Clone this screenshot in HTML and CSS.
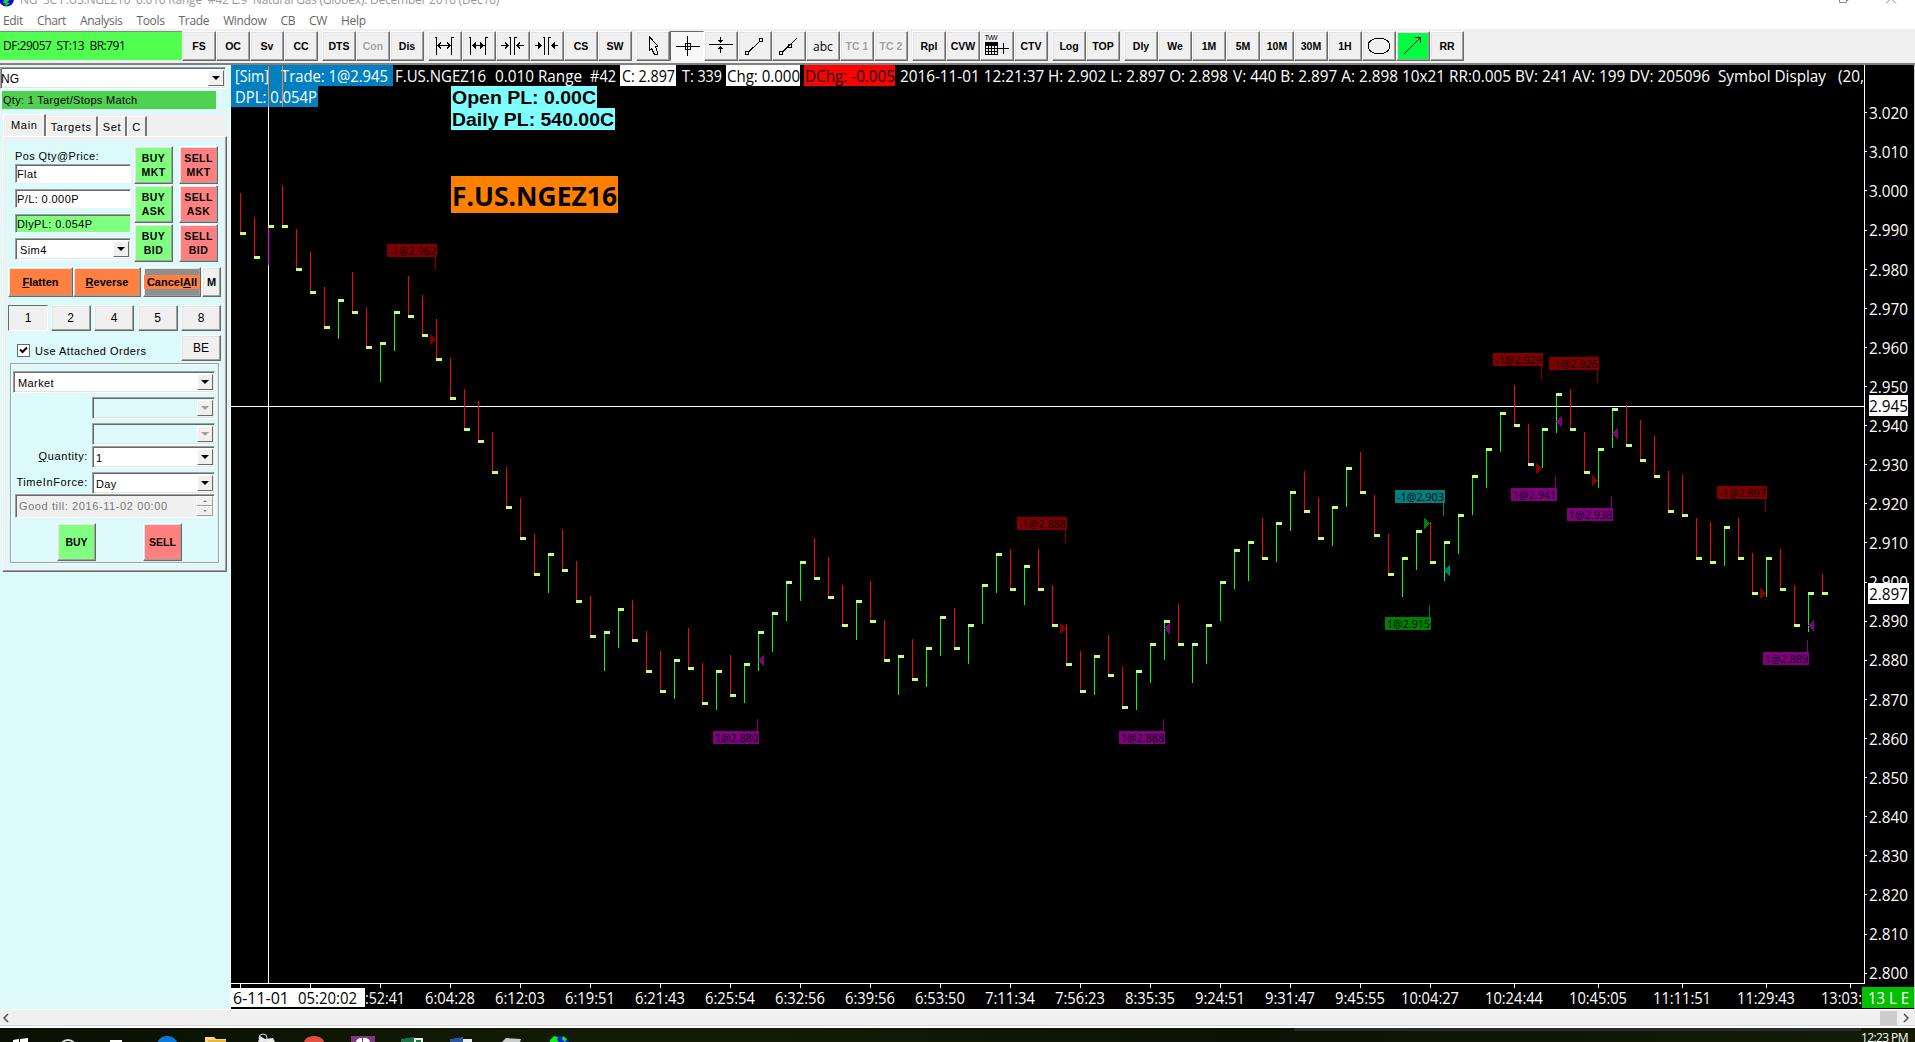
FILE: index.html
```html
<!DOCTYPE html>
<html lang="en">
<head>
  <meta charset="UTF-8" />
  <meta name="viewport" content="width=device-width, initial-scale=1.0"/>
  <title>NG Range Chart</title>
  <link rel="stylesheet" href="styles.css">
</head>
<body>
  <!-- TITLE BAR -->
  <div class="titlebar">
    <svg class="globe" width="15" height="7" viewBox="0 0 15 7"><circle cx="6.500" cy="-1" r="7.500" fill="#0010d8"/><path d="M4 0h5l-2 3h3l-4 3-1-3H3z" fill="#18e020"/></svg>
    <span class="title">NG&nbsp; SC F.US.NGEZ16&nbsp; 0.010 Range&nbsp; #42 L:9&nbsp; Natural Gas (Globex): December 2016 (Dec16)</span>
    <svg class="controls" width="60" height="5" viewBox="0 0 60 5"><path d="M.5 0v2.500h7V0M7 .5h2V0M47 3.500l5-5 5 5" fill="none" stroke="#888"/></svg>
  </div>

  <nav class="menu">
    <span>Edit</span><span>Chart</span><span>Analysis</span><span>Tools</span><span>Trade</span><span>Window</span><span>CB</span><span>CW</span><span>Help</span>
  </nav>

  <!-- TOOLBAR -->
  <div class="toolbar">
    <div class="feed">DF:29057&nbsp; ST:13&nbsp; BR:791</div>
    <div class="tools">
      <button>FS</button><button>OC</button><button>Sv</button><button>CC</button>
    </div>
    <div class="tools">
      <button>DTS</button><button class="off">Con</button><button>Dis</button>
    </div>
    <div class="tools">
      <button><svg viewBox="0 0 30 26"><path d="M4.500 4.500h2v17M23.500 4.500h-2v17M8 12.500h12M11 9.500l-3 3 3 3M17 9.500l3 3-3 3"/></svg></button>
      <button><svg viewBox="0 0 30 26"><path d="M4.500 4.500h2v17M23.500 4.500h-2v17M8 12.500h12"/><path class="fill" d="M12 8.500l-4.500 4 4.500 4zM16 8.500l4.500 4-4.500 4z"/></svg></button>
      <button><svg viewBox="0 0 30 26"><path d="M10.500 4.500h2v17M18.500 4.500h-2v17M3 12.500h7M7 9.500l3 3-3 3M26 12.500h-7M22 9.500l-3 3 3 3"/></svg></button>
      <button><svg viewBox="0 0 30 26"><path d="M10.500 4.500h2v17M18.500 4.500h-2v17M3 12.500h7M26 12.500h-7"/><path class="fill" d="M6 8.500l4 4-4 4zM23 8.500l-4 4 4 4z"/></svg></button>
      <button>CS</button><button>SW</button>
    </div>
    <div class="tools">
      <button><svg viewBox="0 0 30 26"><path d="M11.500 4v13.500l2-2 3 6h3v-2l-2-6h2v-1z"/></svg></button>
      <button class="down"><svg viewBox="0 0 30 26"><path d="M4 13.500h24M15.500 3v20M13 10.500h5.500v6H13z"/></svg></button>
      <button><svg viewBox="0 0 30 26"><path d="M3 11.500h24M14.500 4v5M12.500 7l2 2.500 2-2.500M14.500 20v-6M12.500 16l2-2.500 2 2.500"/></svg></button>
      <button><svg viewBox="0 0 30 26"><path d="M8 19.500L20 8M5.500 18.500h3v3h-3zM19.500 5.500h3v3h-3z"/></svg></button>
      <button><svg viewBox="0 0 30 26"><path d="M8 19.500L23 5M5.500 18.500h3v3h-3zM14.500 11h3v3h-3z"/></svg></button>
      <button class="abc">abc</button><button class="off">TC 1</button><button class="off">TC 2</button>
    </div>
    <div class="tools">
      <button>Rpl</button><button>CVW</button>
      <button><svg viewBox="0 0 30 26"><text x="2.500" y="7" textLength="13">TVW</text><path d="M3 9.500h12.500M3 12.500h12.500M3 15.500h12.500M3 18.500h12.500M3 21.500h12.500M3.500 9v13M6.500 9v13M9.500 9v13M12.500 9v13M15.500 9v13M16 15.500h11M21.500 10v11"/><path class="fill" d="M3 9h13v3H3z"/></svg></button>
      <button>CTV</button>
    </div>
    <div class="tools">
      <button>Log</button><button>TOP</button>
    </div>
    <div class="tools">
      <button>Dly</button><button>We</button><button>1M</button><button>5M</button><button>10M</button><button>30M</button><button>1H</button>
      <button><svg viewBox="0 0 30 26"><ellipse cx="15" cy="13" rx="11" ry="8"/></svg></button>
      <button class="go"><svg viewBox="0 0 30 26"><path d="M6 21L22 5M17 4.500h5.500v5"/></svg></button>
      <button>RR</button>
    </div>
  </div>

  <div class="workspace">
    <!-- TRADE WINDOW -->
    <aside class="trade">
      <div class="select symbol"><span>NG</span><i></i></div>
      <div class="match">Qty: 1 Target/Stops Match</div>
      <div class="tabs"><span class="active">Main</span><span>Targets</span><span>Set</span><span>C</span></div>

      <div class="tab-body">
        <div class="top">
          <div class="position">
            <label>Pos Qty@Price:</label>
            <div class="field">Flat</div>
            <div class="field">P/L: 0.000P</div>
            <div class="field profit">DlyPL: 0.054P</div>
            <div class="select"><span>Sim4</span><i></i></div>
          </div>
          <div class="quick">
            <button class="buy">BUY<br>MKT</button><button class="sell">SELL<br>MKT</button>
            <button class="buy">BUY<br>ASK</button><button class="sell">SELL<br>ASK</button>
            <button class="buy">BUY<br>BID</button><button class="sell">SELL<br>BID</button>
          </div>
        </div>

        <div class="actions">
          <button class="flatten"><u>F</u>latten</button><button class="reverse"><u>R</u>everse</button><button class="cancel"><span>Cancel<u>A</u>ll</span></button><button class="m">M</button>
        </div>

        <div class="sizes">
          <button class="pressed">1</button><button>2</button><button>4</button><button>5</button><button>8</button>
        </div>

        <div class="attached">
          <div class="check"><svg width="9" height="9" viewBox="0 0 9 9"><path d="M1 3.500l2.500 2.500L8 1.500" fill="none" stroke="#000" stroke-width="2"/></svg></div>
          <span>Use Attached Orders</span>
          <button>BE</button>
        </div>

        <div class="order">
          <div class="select"><span>Market</span><i></i></div>
          <div class="row r1"><div class="select disabled"><span></span><i></i></div></div>
          <div class="row r2"><div class="select disabled"><span></span><i></i></div></div>
          <div class="row"><label><u>Q</u>uantity:</label><div class="select"><span>1</span><i></i></div></div>
          <div class="row r1"><label>TimeInForce:</label><div class="select"><span>Day</span><i></i></div></div>
          <div class="till"><span>Good till: 2016-11-02 00:00</span><div class="spin"><b></b><b class="dn"></b></div></div>
          <div class="send"><button class="buy">BUY</button><button class="sell">SELL</button></div>
        </div>
      </div>
    </aside>

    <!-- CHART, drawn by chart.js -->
    <svg id="chart" class="chart" width="1685" height="944" viewBox="230 65 1685 944"></svg>
  </div>

  <div class="scrollbar">
    <svg width="8" height="10" viewBox="0 0 8 10"><path d="M6 1L2 5l4 4"/></svg>
    <div class="thumb"></div>
    <svg width="8" height="10" viewBox="0 0 8 10"><path d="M2 1l4 4-4 4"/></svg>
  </div>

  <div class="taskbar">
    <svg width="620" height="14" viewBox="0 0 620 14">
      <path d="M13 12l6-1v3h-6zM20 11l8-1v4h-8z" fill="#fff"/>
      <circle cx="68" cy="20" r="8" fill="none" stroke="#ddd" stroke-width="2"/>
      <path d="M110 12h12v2h-12z" fill="#fff"/>
      <path d="M158 14c2-8 16-8 19 0z" fill="#0a78d7"/>
      <path d="M205 9h9l2 2h10v3h-21z" fill="#f4d878"/><path d="M208 12h18v2h-18z" fill="#e8b83c"/>
      <path d="M258 14l2-6 5 3 8-1 2 4z" fill="#eee"/><circle cx="263" cy="10" r="4" fill="none" stroke="#ddd"/>
      <path d="M304 14c2-8 18-8 20 0z" fill="#e05040"/>
      <path d="M351 8h24v6h-24z" fill="#80397b"/><path d="M356 14q1-4 5-4h4q4 0 5 4z" fill="#fff"/><path d="M362 10h1v4h-1z" fill="#80397b"/>
      <path d="M401 11l13-2v5h-13z" fill="#1f7244"/><path d="M414 10h9v4h-9z" fill="#eee"/><path d="M416 12h5v2h-5z" fill="#1f7244"/>
      <path d="M450 11l13-2v5h-13z" fill="#2b579a"/><path d="M463 11h9v3h-9z" fill="#eee"/>
      <path d="M502 14l4-4 15 1-1 3z" fill="#ccc"/>
      <path d="M549 14c2-8 17-8 20 0z" fill="#0a20e0"/><path d="M550 12l4-4 4 1-1 3 2 2h-9zM563 8l4 3-2 3-3-3z" fill="#10ee10"/>
    </svg>
    <div class="preview"></div>
    <span class="clock">12:23 PM</span>
  </div>

  <script src="chart.js"></script>
</body>
</html>
```
FILE: styles.css
```css
* {
  box-sizing: border-box;
}

body {
  margin: 0;
  width: 1915px;
  height: 1042px;
  overflow: hidden;
  background: #fff;
  font-family: "Liberation Sans", Arial, sans-serif;
  font-size: 11px;
  color: #000;
}

button {
  margin: 0;
  padding: 0;
  font-family: inherit;
  color: #000;
  background: #f0f0f0;
  border: 1px solid;
  border-color: #fff #696969 #696969 #fff;
  box-shadow: inset -1px -1px #a0a0a0, inset 1px 1px #e3e3e3;
  border-radius: 0;
}

/* title and menu */
.titlebar {
  display: flex;
  height: 8px;
  overflow: hidden;
}

.title {
  width: 475px;
  margin: -9px 0 0 5px;
  font: 12px/17px "Open Sans", sans-serif;
  letter-spacing: -0.22px;
  white-space: nowrap;
  color: #999;
}

.controls {
  margin-left: auto;
  margin-right: 16px;
}

.menu {
  display: flex;
  gap: 14px;
  height: 21px;
  padding-left: 3px;
  font: 12px/25px "Open Sans", sans-serif;
  letter-spacing: -0.34px;
  color: #666;
}

/* toolbar */
.toolbar {
  display: flex;
  height: 36px;
  padding-top: 2px;
  background: #f0f0f0;
  border-bottom: 2px solid #808080;
}

.feed {
  width: 182px;
  height: 29px;
  padding-left: 3px;
  background: #50ff50;
  border-top: 1px solid #888;
  font: 12px/27px "Open Sans", sans-serif;
  letter-spacing: -0.5px;
}

.tools {
  display: flex;
  margin-right: 4px;
}

.tools button {
  width: 34px;
  height: 30px;
  font-size: 10.5px;
  font-weight: bold;
  line-height: 26px;
}

.tools .off {
  color: #a0a0a0;
  text-shadow: 1px 1px #fff;
}

.tools .abc {
  font: 12px "Open Sans", sans-serif;
}

.tools .down {
  background: #f8f8f8;
  border-color: #696969 #fff #fff #696969;
  box-shadow: none;
}

.tools .go {
  background: #00ff40;
}

.tools svg {
  display: block;
  width: 30px;
  height: 26px;
  margin: 0 auto;
  fill: none;
  stroke: #000;
  shape-rendering: crispEdges;
}

.tools svg .fill {
  fill: #000;
  stroke: none;
}

.tools svg text {
  font-size: 7px;
  font-weight: normal;
  fill: #000;
  stroke: none;
}

.workspace {
  display: flex;
  height: 944px;
}

/* trade window */
.trade {
  width: 230px;
  padding-top: 2px;
  background: #dcfafa;
  letter-spacing: 0.4px;
}

.select {
  display: flex;
  height: 22px;
  background: #fff;
  border: 1px solid;
  border-color: #a0a0a0 #fff #fff #a0a0a0;
  box-shadow: inset 1px 1px #696969, inset -1px -1px #e3e3e3;
  padding: 2px 1px 2px 4px;
  line-height: 19px;
}

.select span {
  flex: 1;
}

.select i {
  width: 16px;
  background: #f0f0f0;
  border: 1px solid;
  border-color: #fff #696969 #696969 #fff;
  display: flex;
  align-items: center;
  justify-content: center;
}

.select i::before {
  content: "";
  border: 4px solid transparent;
  border-top-color: #000;
  border-bottom: 0;
}

.select.disabled {
  background: #dcfafa;
}

.disabled i::before {
  border-top-color: #a0a0a0;
}

.symbol {
  width: 226px;
  padding-left: 0;
  font-size: 12px;
  letter-spacing: 0;
}

.match {
  width: 214px;
  height: 18px;
  margin: 2px 0 5px 2px;
  padding-left: 1px;
  background: #50d050;
  line-height: 19px;
  letter-spacing: 0.3px;
}

.tabs {
  display: flex;
  align-items: flex-end;
  width: 225px;
  height: 22px;
  margin-left: 2px;
  padding-left: 1px;
  background: #f0f0f0;
}

.tabs span {
  height: 20px;
  padding: 0 4px;
  border: 1px solid #fff;
  border-right: 2px solid #777;
  border-bottom: 0;
  line-height: 20px;
  letter-spacing: 0.7px;
}

.tabs .active {
  height: 22px;
  padding: 0 6px 0 7px;
}

.tab-body {
  width: 225px;
  height: 436px;
  margin-left: 2px;
  padding: 8px 0 0 3px;
  border: 1px solid;
  border-color: #fff #696969 #696969 #fff;
  box-shadow: inset -1px -1px #a0a0a0, inset 0 0 0 3px #f0f0f0;
}

.top {
  display: flex;
  padding-left: 9px;
}

.position {
  display: flex;
  flex-direction: column;
  width: 116px;
  margin-right: 3px;
}

.position label {
  height: 19px;
  line-height: 23px;
}

.field {
  height: 19px;
  margin-bottom: 6px;
  padding-left: 1px;
  background: #fff;
  border: 1px solid;
  border-color: #a0a0a0 #fff #fff #a0a0a0;
  box-shadow: inset 1px 1px #696969;
  line-height: 18px;
}

.field.profit {
  margin-bottom: 5px;
  background: #80ff80;
}

.quick {
  display: grid;
  grid-template-columns: 39px 39px;
  gap: 1px 6px;
  padding-top: 1px;
}

.quick button {
  height: 38px;
  font-size: 10.5px;
  font-weight: bold;
  line-height: 14px;
  letter-spacing: 0.4px;
}

button.buy {
  background: #80ff80;
}

button.sell {
  background: #ff8080;
}

.actions {
  display: flex;
  margin: 5px 0 0 2px;
}

.actions button {
  height: 30px;
  font-size: 11px;
  font-weight: bold;
  background: #ff8040;
}

.actions .flatten {
  width: 65px;
}

.actions .reverse {
  width: 68px;
}

.actions .cancel {
  width: 58px;
  margin: 0 1px 0 2px;
  background: #8f8f8f;
}

.cancel span {
  display: block;
  background: #ff8040;
  line-height: 14px;
}

.actions .m {
  width: 19px;
  background: #f0f0f0;
}

.sizes {
  display: flex;
  justify-content: space-between;
  width: 213px;
  margin: 8px 0 0 2px;
}

.sizes button {
  width: 40px;
  height: 26px;
  font-size: 12px;
}

.sizes .pressed {
  margin-right: -1px;
  border-color: #696969 #fff #fff #696969;
  box-shadow: none;
}

.attached {
  display: flex;
  align-items: center;
  height: 26px;
  margin: 4px 0 0 11px;
}

.check {
  width: 13px;
  height: 13px;
  margin: 5px 5px 0 0;
  padding: 1px;
  background: #fff;
  border: 1px solid #696969;
}

.check svg {
  display: block;
}

.attached span {
  width: 146px;
  padding-top: 6px;
  letter-spacing: 0.5px;
  white-space: nowrap;
}

.attached button {
  width: 40px;
  height: 26px;
  font-size: 12px;
}

.order {
  width: 209px;
  height: 200px;
  margin: 2px 0 0 4px;
  padding: 7px 3px 0 2px;
  border: 1px solid #a0a0a0;
  box-shadow: inset 1px 1px #fff, 1px 1px #fff;
}

.row {
  display: flex;
  justify-content: flex-end;
  margin-top: 1px;
}

.row.r1,
.row.r2 {
  margin-top: 4px;
}

.row label {
  line-height: 21px;
  margin-right: 4px;
  letter-spacing: 0.6px;
}

.row .select {
  width: 123px;
  padding-left: 3px;
}

.till {
  display: flex;
  height: 24px;
  margin: 0 0 0 2px;
  padding: 1px 1px 1px 3px;
  background: #f0f0f0;
  border: 1px solid;
  border-color: #a0a0a0 #fff #fff #a0a0a0;
  box-shadow: inset 1px 1px #696969;
  color: #777;
  line-height: 21px;
}

.till span {
  flex: 1;
  white-space: nowrap;
  letter-spacing: 0.6px;
}

.spin b {
  display: flex;
  align-items: center;
  justify-content: center;
  width: 17px;
  height: 10px;
  border: 1px solid;
  border-color: #fff #a0a0a0 #a0a0a0 #fff;
}

.spin b::before {
  content: "";
  border: 2px solid transparent;
  border-bottom-color: #888;
  border-top: 0;
}

.spin .dn::before {
  border: 2px solid transparent;
  border-top-color: #888;
  border-bottom: 0;
}

.send {
  display: flex;
  gap: 47px;
  margin: 5px 0 0 44px;
}

.send button {
  width: 39px;
  height: 38px;
  font-size: 10.5px;
  font-weight: bold;
}

/* chart */
.chart {
  display: block;
  background: #000;
  shape-rendering: crispEdges;
  font-family: "Open Sans", "Noto Sans", sans-serif;
}

.chart .axis {
  font-size: 16px;
  fill: #fff;
}

.chart .dark {
  fill: #000;
}

.chart .fill-label {
  font-size: 11px;
  fill: #000;
}

.chart .pl {
  font: bold 19px "Liberation Sans", Arial, sans-serif;
}

.chart .sym {
  font-size: 26px;
  font-weight: bold;
}

/* bottom */
.scrollbar {
  display: flex;
  align-items: center;
  height: 19px;
  padding: 0 5px 0 2px;
  background: #f0f0f0;
  border-top: 1px solid #fff;
  border-bottom: 2px solid #fff;
  box-shadow: inset 0 -1px #d8d8d8;
}

.scrollbar svg {
  fill: none;
  stroke: #555;
  stroke-width: 1.5;
}

.thumb {
  width: 17px;
  height: 15px;
  margin: 0 5px 0 auto;
  background: #cdcdcd;
}

.taskbar {
  display: flex;
  height: 14px;
  overflow: hidden;
  background: linear-gradient(90deg, #0b1003, #141c05 35%, #0d1205 65%, #141b06);
}

.preview {
  width: 567px;
  height: 3px;
  margin-left: 674px;
  background: #2a2a2e;
}

.clock {
  flex: 1;
  height: 14px;
  font: 12px/19px "Open Sans", sans-serif;
  letter-spacing: -0.6px;
  white-space: nowrap;
  color: #fff;
}
```
FILE: chart.js
```js
const chart = document.getElementById('chart');
const NS = 'http://www.w3.org/2000/svg';

function add(tag, attrs, text) {
  const el = document.createElementNS(NS, tag);
  for (const key in attrs) el.setAttribute(key, attrs[key]);
  if (text) el.textContent = text;
  chart.appendChild(el);
}

function rect(x, y, width, height, fill) {
  add('rect', { x, y, width, height, fill });
}

// text stretched between x1 and x2
function label(x1, x2, y, text, cls) {
  add('text', { x: x1, y, class: cls, textLength: x2 - x1, lengthAdjust: 'spacingAndGlyphs' }, text);
}

const barX = n => 240 + (n - 1) * 14;
const priceY = p => Math.floor(112.7 + (3020 - p) * 3.911);

// closes in thousandths, sign of the bar: r = down, g = up
const bars = `2989r 2983r 2991g 2991r 2980r 2974r 2965r 2972g 2969r 2960r 2961g 2969g 2968r 2963r 2957r
2947r 2939r 2936r 2928r 2919r 2911r 2902r 2907g 2903r 2895r 2886r 2887g 2893g 2885r 2877r 2872r 2880g
2878r 2869r 2877g 2871r 2879g 2887g 2892g 2900g 2905g 2901r 2896r 2889r 2895g 2890r 2880r 2881g 2875r
2883g 2891g 2883r 2889g 2899g 2907g 2898r 2904g 2898r 2889r 2879r 2872r 2881g 2876r 2868r 2877g 2884g
2890g 2884r 2884g 2889g 2900g 2908g 2910g 2906r 2915g 2923g 2918r 2911r 2919g 2929g 2923r 2912r 2902r
2906g 2913g 2905r 2910g 2917g 2927g 2934g 2943g 2940r 2930r 2939g 2948g 2939r 2928r 2934g 2944g 2935r
2931r 2927r 2918r 2917r 2906r 2905r 2914g 2906r 2897r 2906g 2898r 2889r 2897g 2897r`.split(/\s+/);

// crosshair
rect(268, 65, 1, 918, '#fff');
rect(231, 406, 1633, 1, '#fff');

bars.forEach((bar, i) => {
  const x = barX(i + 1);
  const y = priceY(parseInt(bar));
  const last = i === bars.length - 1;
  if (bar.endsWith('r')) {
    rect(x, last ? y - 19 : y - 40, 1, last ? 19 : 40, '#f00');
  } else {
    rect(x, y, 1, 39, i === 2 ? '#f0f' : '#0f0');
  }
  rect(x, y - 1, 6, 3, '#c0ff80');
});

// fills: bar, price, label top, colour
const fills = [
  [15, -2962, 244, '#800000'], [38, 2880, 731, '#800080'], [60, -2888, 517, '#800000'],
  [67, 2888, 731, '#800080'], [86, 2915, 617, '#008000'], [87, -2903, 490, '#008080'],
  [94, -2929, 353, '#800000'], [95, 2941, 488, '#800080'], [98, -2926, 357, '#800000'],
  [99, 2938, 508, '#800080'], [110, -2897, 486, '#800000'], [113, 2889, 652, '#800080']
];

fills.forEach(([n, price, top, color]) => {
  const sell = price < 0;
  const x = barX(n);
  const p = Math.abs(price);
  const y = priceY(p) + 0.5;
  const right = color === '#800000' || color === '#008000';
  const d = right ? `M${x - 6} ${y - 6}v12l6 -6z` : `M${x + 6} ${y - 6}v12l-6 -6z`;
  add('path', { d, fill: color });
  const w = sell ? 50 : 46;
  rect(x + 1 - w, top, w, 13, color);
  rect(x - 1, sell ? top + 13 : top - 12, 1, sell ? 13 : 12, color);
  label(x + 3 - w, x, top + 11, (sell ? '-1@' : '1@') + (p / 1000).toFixed(3), 'fill-label');
});

// price axis
rect(1864, 65, 1, 919, '#fff');
rect(230, 65, 1, 944, '#fff');
rect(1914, 65, 1, 944, '#ccc');
for (let p = 3020; p >= 2800; p -= 10) {
  rect(1865, priceY(p), 2, 1, '#fff');
  label(1869, 1908, Math.round(119.2 + (3020 - p) * 3.909), (p / 1000).toFixed(3), 'axis');
}
rect(1869, 395, 39, 21, '#fff');
label(1869, 1908, 412, '2.945', 'axis dark');
rect(1868, 583, 41, 21, '#fff');
label(1869, 1908, 600, '2.897', 'axis dark');

// time axis
rect(231, 983, 1634, 1, '#fff');
const times = ['', '', '5:52:41', '6:04:28', '6:12:03', '6:19:51', '6:21:43', '6:25:54', '6:32:56', '6:39:56',
  '6:53:50', '7:11:34', '7:56:23', '8:35:35', '9:24:51', '9:31:47', '9:45:55', '10:04:27', '10:24:44',
  '10:45:05', '11:11:51', '11:29:43', '13:03:'];
times.forEach((t, i) => {
  const x = i < 18 ? 240 + i * 70 : 1430 + (i - 17) * 84;
  rect(x, 984, 1, 4, '#fff');
  if (!t) return;
  const half = t.length > 7 ? 29 : 25;
  if (t === '5:52:41') label(365, 405, 1004, ':52:41', 'axis');
  else if (t === '13:03:') label(1821, 1862, 1004, t, 'axis');
  else label(x - half, x + half, 1004, t, 'axis');
});
rect(231, 988, 134, 19, '#fff');
label(233, 289, 1004, '6-11-01', 'axis dark');
label(298, 357, 1004, '05:20:02', 'axis dark');
rect(1862, 987, 52, 21, '#00c000');
label(1868, 1909, 1004, '13 L E', 'axis');

// header line
rect(231, 65, 162, 21, '#0080c0');
rect(231, 86, 87, 21, '#0080c0');
label(235, 269, 82, '[Sim]', 'axis');
label(281, 388, 82, 'Trade: 1@2.945', 'axis');
label(235, 317, 103, 'DPL: 0.054P', 'axis');
rect(268, 66, 1, 41, '#ff7f3f');
rect(282, 66, 1, 41, '#ff7f3f');
label(395, 486, 82, 'F.US.NGEZ16', 'axis');
label(495, 582, 82, '0.010 Range', 'axis');
label(590, 616, 82, '#42', 'axis');
rect(620, 65, 56, 21, '#fff');
label(622, 675, 82, 'C: 2.897', 'axis dark');
label(682, 722, 82, 'T: 339', 'axis');
rect(726, 65, 74, 21, '#fff');
label(727, 800, 82, 'Chg: 0.000', 'axis dark');
rect(804, 65, 91, 21, '#f00');
label(805, 895, 82, 'DChg: -0.005', 'axis dark');
label(900, 1228, 82, '2016-11-01 12:21:37 H: 2.902 L: 2.897 O: 2.898', 'axis');
label(1233, 1710, 82, 'V: 440 B: 2.897 A: 2.898 10x21 RR:0.005 BV: 241 AV: 199 DV: 205096', 'axis');
label(1718, 1826, 82, 'Symbol Display', 'axis');
label(1838, 1864, 82, '(20,', 'axis');

rect(451, 86, 146, 22, '#80ffff');
rect(451, 108, 164, 22, '#80ffff');
label(452, 596, 104, 'Open PL: 0.00C', 'pl');
label(452, 614, 126, 'Daily PL: 540.00C', 'pl');
rect(451, 176, 167, 37, '#ff8000');
label(452, 617, 206, 'F.US.NGEZ16', 'sym');
```
